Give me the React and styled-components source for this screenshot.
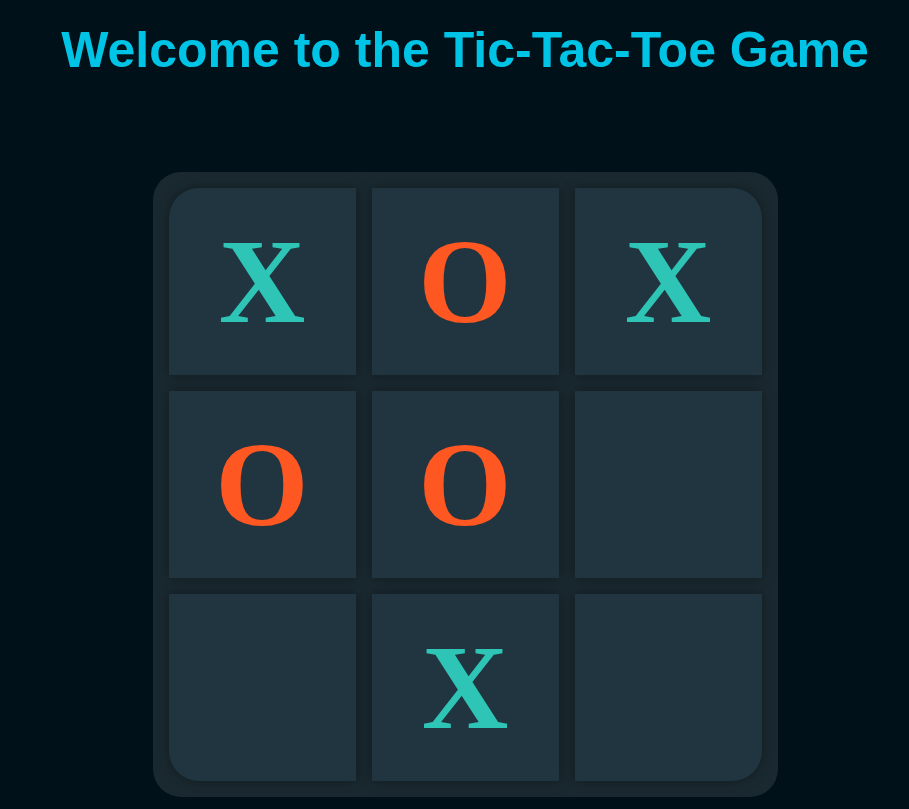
import React from "react";
import styled, { createGlobalStyle } from "styled-components";

const Global = createGlobalStyle`
  html, body {
    margin: 0;
    padding: 0;
    background: #00111a;
  }
  body {
    font-family: "Liberation Sans", Arial, sans-serif;
  }
`;

const Page = styled.div`
  min-height: 809px;
  display: flex;
  flex-direction: column;
  align-items: center;
  padding-left: 21px;
  box-sizing: border-box;
`;

const Title = styled.h1`
  margin: 21px 0 0;
  font-family: "Liberation Sans", Arial, sans-serif;
  font-weight: bold;
  font-size: 50px;
  line-height: 58px;
  color: #00c4e6;
  white-space: nowrap;
`;

const Board = styled.div`
  margin-top: 93px;
  display: grid;
  grid-template-columns: repeat(3, 187px);
  grid-template-rows: repeat(3, 187px);
  gap: 16px;
  padding: 16px;
  background: #1a2930;
  border-radius: 28px;
`;

const Cell = styled.div`
  display: flex;
  align-items: center;
  justify-content: center;
  background: #203540;
  box-shadow: 0 0 12px rgba(0, 0, 0, 0.35);
  font-family: "Liberation Serif", "Times New Roman", serif;
  font-weight: bold;
  font-size: 120px;
  line-height: 1;
  color: ${(p) => (p.$mark === "O" ? "#ff5722" : "#2ec4b6")};
  border-radius: ${(p) => p.$radius || "0"};
  user-select: none;
`;

const board = ["X", "O", "X", "O", "O", "", "", "X", ""];

const corners = {
  0: "30px 0 0 0",
  2: "0 30px 0 0",
  6: "0 0 0 30px",
  8: "0 0 30px 0",
};

const App = () => {
  return (
    <>
      <Global />
      <Page>
        <Title>Welcome to the Tic-Tac-Toe Game</Title>
        <Board>
          {board.map((m, i) => (
            <Cell key={i} $mark={m} $radius={corners[i]}>
              {m}
            </Cell>
          ))}
        </Board>
      </Page>
    </>
  );
};

export default App;
